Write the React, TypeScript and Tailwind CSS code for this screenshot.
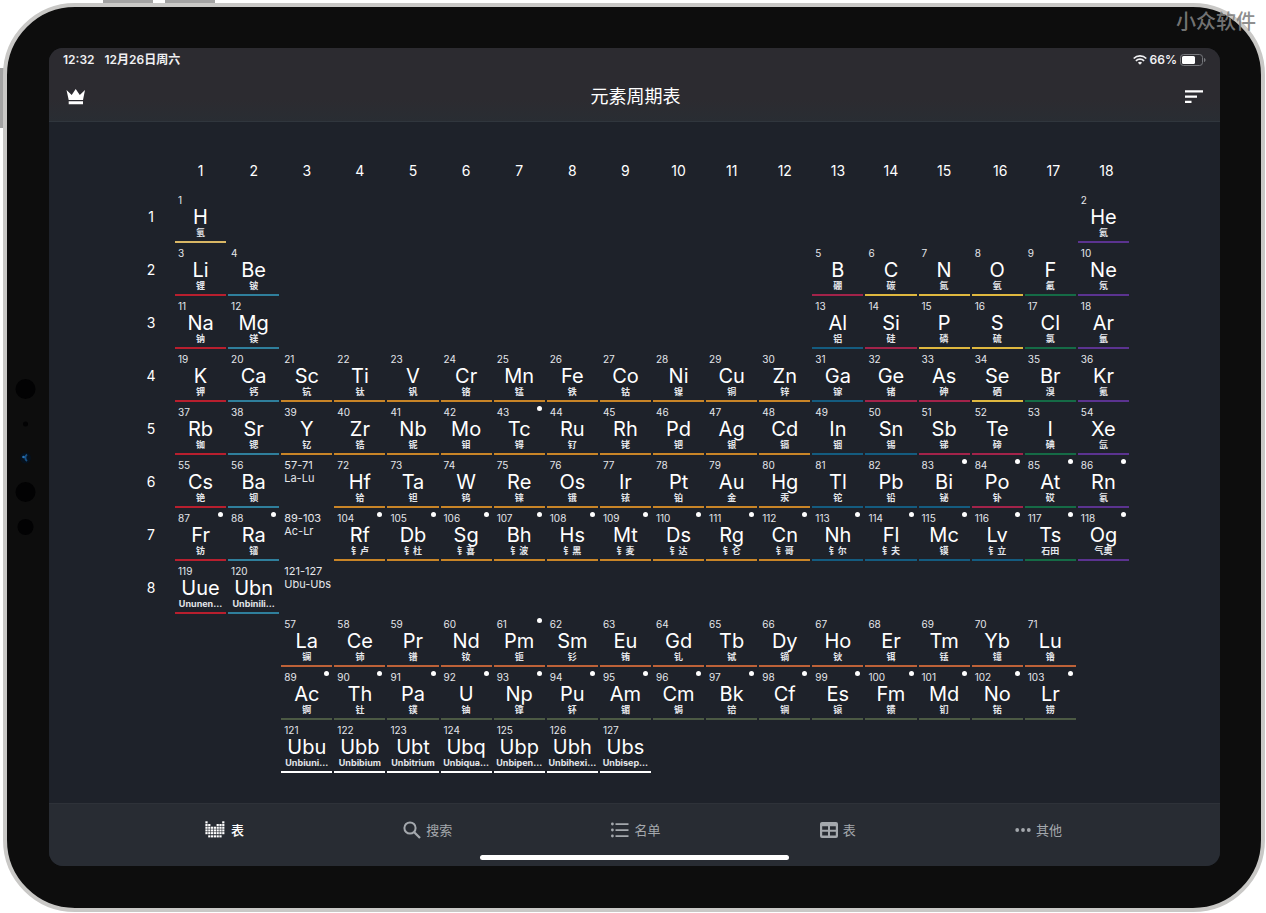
import clsx from "clsx";
import { ReactNode } from "react";

type Kind =
  | "hydrogen"
  | "alkali"
  | "alkaline"
  | "transition"
  | "poor"
  | "metalloid"
  | "nonmetal"
  | "halogen"
  | "noble"
  | "lanthanide"
  | "actinide"
  | "super";

type Item = [symbol: string, name: string, kind: Kind];

interface Run {
  col: number;
  first: number;
  items: Item[];
}

interface Row {
  period?: number;
  runs: Run[];
  range?: [string, string];
}

const underline: Record<Kind, string> = {
  hydrogen: "border-[#d9b765]",
  alkali: "border-[#b81f2e]",
  alkaline: "border-[#2f7f9c]",
  transition: "border-[#c98527]",
  poor: "border-[#145c80]",
  metalloid: "border-[#a3234a]",
  nonmetal: "border-[#dfb83f]",
  halogen: "border-[#156b46]",
  noble: "border-[#5b3390]",
  lanthanide: "border-[#bd6238]",
  actinide: "border-[#4c5a44]",
  super: "border-white",
};

const rows: Row[] = [
  {
    period: 1,
    runs: [
      { col: 1, first: 1, items: [["H", "氢", "hydrogen"]] },
      { col: 18, first: 2, items: [["He", "氦", "noble"]] },
    ],
  },
  {
    period: 2,
    runs: [
      { col: 1, first: 3, items: [["Li", "锂", "alkali"], ["Be", "铍", "alkaline"]] },
      {
        col: 13,
        first: 5,
        items: [
          ["B", "硼", "metalloid"],
          ["C", "碳", "nonmetal"],
          ["N", "氮", "nonmetal"],
          ["O", "氧", "nonmetal"],
          ["F", "氟", "halogen"],
          ["Ne", "氖", "noble"],
        ],
      },
    ],
  },
  {
    period: 3,
    runs: [
      { col: 1, first: 11, items: [["Na", "钠", "alkali"], ["Mg", "镁", "alkaline"]] },
      {
        col: 13,
        first: 13,
        items: [
          ["Al", "铝", "poor"],
          ["Si", "硅", "metalloid"],
          ["P", "磷", "nonmetal"],
          ["S", "硫", "nonmetal"],
          ["Cl", "氯", "halogen"],
          ["Ar", "氩", "noble"],
        ],
      },
    ],
  },
  {
    period: 4,
    runs: [
      {
        col: 1,
        first: 19,
        items: [
          ["K", "钾", "alkali"],
          ["Ca", "钙", "alkaline"],
          ["Sc", "钪", "transition"],
          ["Ti", "钛", "transition"],
          ["V", "钒", "transition"],
          ["Cr", "铬", "transition"],
          ["Mn", "锰", "transition"],
          ["Fe", "铁", "transition"],
          ["Co", "钴", "transition"],
          ["Ni", "镍", "transition"],
          ["Cu", "铜", "transition"],
          ["Zn", "锌", "transition"],
          ["Ga", "镓", "poor"],
          ["Ge", "锗", "metalloid"],
          ["As", "砷", "metalloid"],
          ["Se", "硒", "nonmetal"],
          ["Br", "溴", "halogen"],
          ["Kr", "氪", "noble"],
        ],
      },
    ],
  },
  {
    period: 5,
    runs: [
      {
        col: 1,
        first: 37,
        items: [
          ["Rb", "铷", "alkali"],
          ["Sr", "锶", "alkaline"],
          ["Y", "钇", "transition"],
          ["Zr", "锆", "transition"],
          ["Nb", "铌", "transition"],
          ["Mo", "钼", "transition"],
          ["Tc", "锝", "transition"],
          ["Ru", "钌", "transition"],
          ["Rh", "铑", "transition"],
          ["Pd", "钯", "transition"],
          ["Ag", "银", "transition"],
          ["Cd", "镉", "transition"],
          ["In", "铟", "poor"],
          ["Sn", "锡", "poor"],
          ["Sb", "锑", "metalloid"],
          ["Te", "碲", "metalloid"],
          ["I", "碘", "halogen"],
          ["Xe", "氙", "noble"],
        ],
      },
    ],
  },
  {
    period: 6,
    range: ["57-71", "La-Lu"],
    runs: [
      { col: 1, first: 55, items: [["Cs", "铯", "alkali"], ["Ba", "钡", "alkaline"]] },
      {
        col: 4,
        first: 72,
        items: [
          ["Hf", "铪", "transition"],
          ["Ta", "钽", "transition"],
          ["W", "钨", "transition"],
          ["Re", "铼", "transition"],
          ["Os", "锇", "transition"],
          ["Ir", "铱", "transition"],
          ["Pt", "铂", "transition"],
          ["Au", "金", "transition"],
          ["Hg", "汞", "transition"],
          ["Tl", "铊", "poor"],
          ["Pb", "铅", "poor"],
          ["Bi", "铋", "poor"],
          ["Po", "钋", "metalloid"],
          ["At", "砹", "halogen"],
          ["Rn", "氡", "noble"],
        ],
      },
    ],
  },
  {
    period: 7,
    range: ["89-103", "Ac-Lr"],
    runs: [
      { col: 1, first: 87, items: [["Fr", "钫", "alkali"], ["Ra", "镭", "alkaline"]] },
      {
        col: 4,
        first: 104,
        items: [
          ["Rf", "钅卢", "transition"],
          ["Db", "钅杜", "transition"],
          ["Sg", "钅喜", "transition"],
          ["Bh", "钅波", "transition"],
          ["Hs", "钅黑", "transition"],
          ["Mt", "钅麦", "transition"],
          ["Ds", "钅达", "transition"],
          ["Rg", "钅仑", "transition"],
          ["Cn", "钅哥", "transition"],
          ["Nh", "钅尔", "poor"],
          ["Fl", "钅夫", "poor"],
          ["Mc", "镆", "poor"],
          ["Lv", "钅立", "poor"],
          ["Ts", "石田", "halogen"],
          ["Og", "气奥", "noble"],
        ],
      },
    ],
  },
  {
    period: 8,
    range: ["121-127", "Ubu-Ubs"],
    runs: [
      { col: 1, first: 119, items: [["Uue", "Ununen...", "alkali"], ["Ubn", "Unbinili...", "alkaline"]] },
    ],
  },
  {
    runs: [
      {
        col: 3,
        first: 57,
        items: [
          ["La", "镧", "lanthanide"],
          ["Ce", "铈", "lanthanide"],
          ["Pr", "镨", "lanthanide"],
          ["Nd", "钕", "lanthanide"],
          ["Pm", "钷", "lanthanide"],
          ["Sm", "钐", "lanthanide"],
          ["Eu", "铕", "lanthanide"],
          ["Gd", "钆", "lanthanide"],
          ["Tb", "铽", "lanthanide"],
          ["Dy", "镝", "lanthanide"],
          ["Ho", "钬", "lanthanide"],
          ["Er", "铒", "lanthanide"],
          ["Tm", "铥", "lanthanide"],
          ["Yb", "镱", "lanthanide"],
          ["Lu", "镥", "lanthanide"],
        ],
      },
    ],
  },
  {
    runs: [
      {
        col: 3,
        first: 89,
        items: [
          ["Ac", "锕", "actinide"],
          ["Th", "钍", "actinide"],
          ["Pa", "镤", "actinide"],
          ["U", "铀", "actinide"],
          ["Np", "镎", "actinide"],
          ["Pu", "钚", "actinide"],
          ["Am", "镅", "actinide"],
          ["Cm", "锔", "actinide"],
          ["Bk", "锫", "actinide"],
          ["Cf", "锎", "actinide"],
          ["Es", "锿", "actinide"],
          ["Fm", "镄", "actinide"],
          ["Md", "钔", "actinide"],
          ["No", "锘", "actinide"],
          ["Lr", "铹", "actinide"],
        ],
      },
    ],
  },
  {
    runs: [
      {
        col: 3,
        first: 121,
        items: [
          ["Ubu", "Unbiuni...", "super"],
          ["Ubb", "Unbibium", "super"],
          ["Ubt", "Unbitrium", "super"],
          ["Ubq", "Unbiqua...", "super"],
          ["Ubp", "Unbipen...", "super"],
          ["Ubh", "Unbihexi...", "super"],
          ["Ubs", "Unbisep...", "super"],
        ],
      },
    ],
  },
];

const groups = Array.from({ length: 18 }, (_, i) => i + 1);

const isRadioactive = (n: number) =>
  n === 43 || n === 61 || (n >= 83 && n <= 118);

function ElementCell({ number, item }: { number: number; item: Item }) {
  const [symbol, name, kind] = item;
  return (
    <button
      className={clsx(
        "relative flex h-[53px] w-full flex-col items-center border-b-2 pt-1 whitespace-nowrap",
        underline[kind]
      )}
    >
      <span className="w-full pl-[3px] text-left text-[10px] leading-3 text-[#e4e6ea]">
        {number}
      </span>
      <span className="text-[20px] leading-[22px]">{symbol}</span>
      <span className="text-[9px] leading-[10px] font-bold text-[#e4e6ea]">
        {name}
      </span>
      {isRadioactive(number) && (
        <i className="absolute top-1 right-[3px] size-[5px] rounded-full bg-white" />
      )}
    </button>
  );
}

function TableRow({ row }: { row: Row }) {
  const find = (col: number) => {
    const run = row.runs.find(
      (r) => col >= r.col && col < r.col + r.items.length
    );
    if (!run) return null;
    const i = col - run.col;
    return <ElementCell number={run.first + i} item={run.items[i]} />;
  };

  return (
    <tr className="h-[53px]">
      <th scope="row" className="p-0 text-[14px] font-normal">
        {row.period}
      </th>
      {groups.map((col) => (
        <td key={col} className="px-px py-0 align-top">
          {col === 3 && row.range ? (
            <p className="pt-1 pl-[3px] text-[11px] leading-[13px] whitespace-nowrap text-[#e4e6ea]">
              {row.range[0]}
              <br />
              {row.range[1]}
            </p>
          ) : (
            find(col)
          )}
        </td>
      ))}
    </tr>
  );
}

function PeriodicTable() {
  return (
    <table className="w-full table-fixed border-collapse">
      <thead>
        <tr className="h-[39px]">
          <td className="w-[46px] p-0" />
          {groups.map((g) => (
            <th
              key={g}
              scope="col"
              className={clsx("py-0 pr-0 text-[14px] font-normal", g > 15 ? "pl-1.5" : "pl-0")}
            >
              {g}
            </th>
          ))}
        </tr>
      </thead>
      <tbody>
        {rows.map((row, i) => (
          <TableRow key={i} row={row} />
        ))}
      </tbody>
    </table>
  );
}

function CrownIcon() {
  return (
    <svg width="20" height="16" viewBox="0 0 20 16" fill="currentColor">
      <path d="M.5 1 5.700 6 9.700 0l4.100 6L19 1l-2 10H2.700z" />
      <path d="M2.700 12.300H17v3H2.700z" />
    </svg>
  );
}

function SortIcon() {
  return (
    <svg width="18" height="14" viewBox="0 0 18 14" fill="currentColor">
      <path d="M0 .2h18v2.200H0zM0 5.500h12v2.200H0zM0 10.800h6.500V13H0z" />
    </svg>
  );
}

function WifiIcon() {
  return (
    <svg width="14" height="10" viewBox="0 0 14 10" fill="none" stroke="currentColor" strokeWidth="1.700">
      <path d="M.7 3.500a9 9 0 0 1 12.600 0" />
      <path d="M2.900 5.800a5.900 5.900 0 0 1 8.200 0" />
      <path d="M7 9.800 4.900 7.700a3 3 0 0 1 4.200 0z" fill="currentColor" stroke="none" />
    </svg>
  );
}

function BatteryIcon() {
  return (
    <svg width="26" height="12" viewBox="0 0 26 12">
      <rect x=".5" y=".5" width="22" height="11" rx="3" fill="none" stroke="#77787c" />
      <rect x="2" y="2" width="13" height="8" rx="1.500" fill="#fff" />
      <path d="M24 4v4c1-.4 1.500-1.100 1.500-2S25 4.400 24 4z" fill="#77787c" />
    </svg>
  );
}

// first filled square of each column in the mini table
const columnTops = [0, 1, 2, 2, 1, 1, 0];

function TableTabIcon() {
  return (
    <svg width="21" height="17" viewBox="0 0 21 17" fill="currentColor">
      {columnTops.map((top, x) =>
        Array.from({ length: 5 - top }, (_, y) => (
          <rect
            key={`${x}-${y}`}
            x={x * 2.8 + 0.4}
            y={(top + y) * 2.7 + 0.3}
            width="2.200"
            height="2.100"
          />
        ))
      )}
      {[1, 2, 3, 4, 5].map((x) => (
        <rect key={x} x={x * 2.8 + 0.4} y="14.300" width="2.200" height="2.100" />
      ))}
    </svg>
  );
}

function SearchIcon() {
  return (
    <svg width="18" height="18" viewBox="0 0 18 18" fill="none" stroke="currentColor" strokeWidth="2">
      <circle cx="7" cy="7" r="5.600" />
      <path d="m11 11 6 6" strokeWidth="2.300" />
    </svg>
  );
}

function ListIcon() {
  return (
    <svg width="18" height="16" viewBox="0 0 18 16" fill="currentColor">
      <path d="M4.500 1.200h13v1.700h-13zM4.500 7.200h13v1.700h-13zM4.500 13.200h13v1.700h-13z" />
      <circle cx="1.400" cy="2" r="1.400" />
      <circle cx="1.400" cy="8" r="1.400" />
      <circle cx="1.400" cy="14" r="1.400" />
    </svg>
  );
}

function GridIcon() {
  return (
    <svg width="18" height="16" viewBox="0 0 18 16" fill="currentColor">
      <path
        fillRule="evenodd"
        d="M2 0h14a2 2 0 0 1 2 2v12a2 2 0 0 1-2 2H2a2 2 0 0 1-2-2V2C0 .9.900 0 2 0zm.2 4.200v3.500H8V4.200zm7.800 0v3.500h5.800V4.200zM2.200 9.800v3.700H8V9.800zm7.800 0v3.700h5.800V9.800z"
      />
    </svg>
  );
}

function MoreIcon() {
  return (
    <svg width="16" height="16" viewBox="0 0 16 16" fill="currentColor">
      <circle cx="2.200" cy="8" r="1.900" />
      <circle cx="8" cy="8" r="1.900" />
      <circle cx="13.800" cy="8" r="1.900" />
    </svg>
  );
}

const tabs: { label: string; icon: ReactNode }[] = [
  { label: "表", icon: <TableTabIcon /> },
  { label: "搜索", icon: <SearchIcon /> },
  { label: "名单", icon: <ListIcon /> },
  { label: "表", icon: <GridIcon /> },
  { label: "其他", icon: <MoreIcon /> },
];

function StatusBar() {
  return (
    <div className="flex h-6 items-center justify-between px-3.5 text-[12px] font-semibold text-[#f0f0f2]">
      <div className="flex gap-2.5">
        <span>12:32</span>
        <span>12月26日周六</span>
      </div>
      <div className="flex items-center gap-[3px]">
        <WifiIcon />
        <span>66%</span>
        <BatteryIcon />
      </div>
    </div>
  );
}

function Cameras() {
  return (
    <svg
      className="absolute top-1/2 left-2 -translate-y-1/2"
      width="22"
      height="160"
      viewBox="0 0 22 160"
    >
      <g fill="#020203">
        <circle cx="10.500" cy="11" r="10" />
        <circle cx="10.500" cy="46" r="2.500" />
        <circle cx="10.500" cy="114" r="10" />
        <circle cx="10.500" cy="149" r="8" />
      </g>
      <circle cx="10.500" cy="80" r="5.500" fill="#06111d" />
      <path d="M12 76.500a4 4 0 0 0 0 6.500" fill="none" stroke="#174f83" strokeWidth="2" />
      <circle cx="8.500" cy="79" r="1.300" fill="#2673b8" />
    </svg>
  );
}

export default function App() {
  return (
    <div className="relative flex min-h-screen flex-col overflow-hidden bg-white pt-[3px] pr-px pb-px pl-[3px] font-['Inter','Noto_Sans_CJK_SC',sans-serif]">
      <i className="absolute top-0 left-[103px] h-1 w-[50px] bg-[#a3a3a3]" />
      <i className="absolute top-0 left-[165px] h-1 w-[50px] bg-[#a3a3a3]" />
      <i className="absolute top-[68px] left-0 h-[60px] w-1 bg-[#a3a3a3]" />

      <div className="relative flex flex-1 flex-col rounded-[72px] border-4 border-[#c9c8c6] bg-[#0d0d0d] pt-[41px] pr-[41px] pb-[42px] pl-[42px]">
        <Cameras />
        <div className="flex flex-1 flex-col overflow-hidden rounded-[14px] bg-[#1e222a] text-white">
          <header className="border-b border-[#30363d] bg-linear-to-b from-[#2c2b30] from-70% to-[#292d33]">
            <StatusBar />
            <div className="flex h-[49px] items-center justify-between px-[17px]">
              <button aria-label="会员">
                <CrownIcon />
              </button>
              <h1 className="text-[18px] leading-6">元素周期表</h1>
              <button aria-label="排序">
                <SortIcon />
              </button>
            </div>
          </header>

          <main className="flex-1 pt-[29px] pr-[90px] pb-[29px] pl-[79px]">
            <PeriodicTable />
          </main>

          <footer className="border-t border-[#2e3239] bg-[#282c33] pb-1.5">
            <nav className="flex h-[51px] items-center justify-between pr-[158px] pl-[156px]">
              {tabs.map((tab, i) => (
                <a
                  key={i}
                  href="#"
                  className={clsx(
                    "flex items-center gap-[5px] text-[13px] leading-5",
                    i === 0 ? "font-medium text-white" : "text-[#a4a8ad]"
                  )}
                >
                  {tab.icon}
                  {tab.label}
                </a>
              ))}
            </nav>
            <div className="mx-auto h-[5px] w-[309px] rounded-full bg-white" />
          </footer>
        </div>
      </div>

      <span className="absolute top-2 right-2.5 text-[20px] leading-7 font-medium text-[#808080]/90">
        小众软件
      </span>
    </div>
  );
}
